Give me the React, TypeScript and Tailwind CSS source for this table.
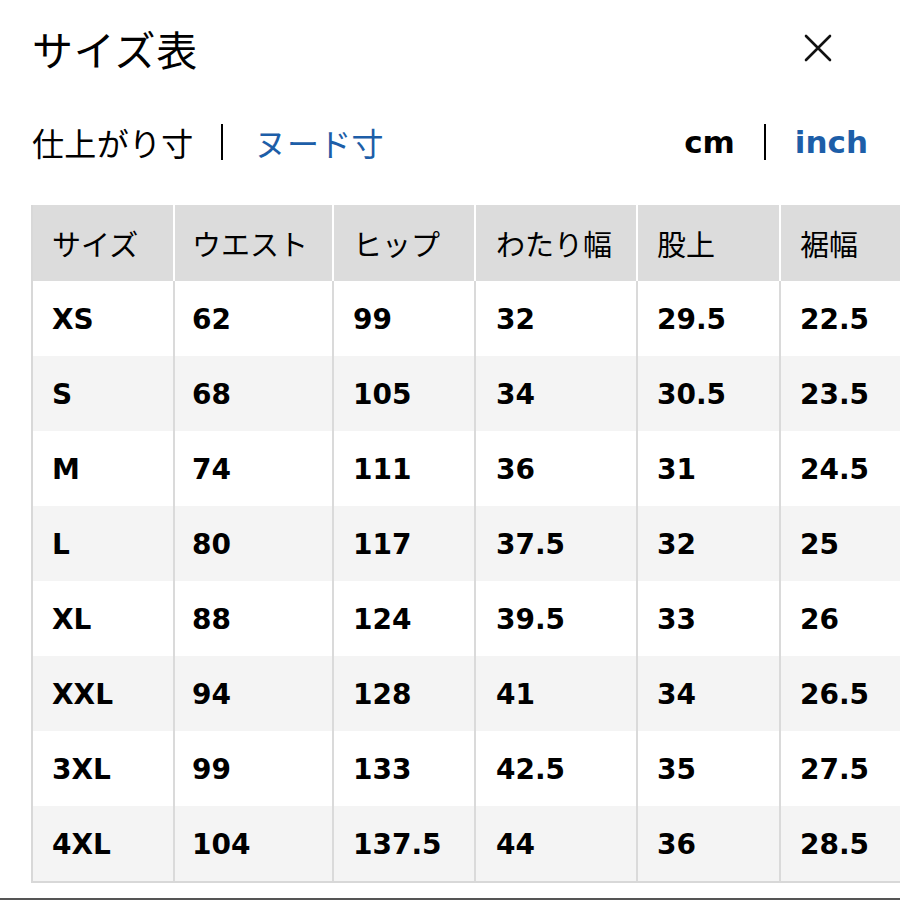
import React from 'react';

const jp = '"Noto Sans CJK JP", "Noto Sans", sans-serif';
const num = '"DejaVu Sans", "Liberation Sans", sans-serif';

const headers = ['サイズ', 'ウエスト', 'ヒップ', 'わたり幅', '股上', '裾幅'];

const rows = [
  ['XS', '62', '99', '32', '29.5', '22.5'],
  ['S', '68', '105', '34', '30.5', '23.5'],
  ['M', '74', '111', '36', '31', '24.5'],
  ['L', '80', '117', '37.5', '32', '25'],
  ['XL', '88', '124', '39.5', '33', '26'],
  ['XXL', '94', '128', '41', '34', '26.5'],
  ['3XL', '99', '133', '42.5', '35', '27.5'],
  ['4XL', '104', '137.5', '44', '36', '28.5'],
];

const cols = 'grid grid-cols-[140px_159px_142px_162px_143px_150px]';

// left padding per column (cols after the first also carry a 2px divider)
const pads = ['pl-[19px]', 'pl-[17px]', 'pl-[19px]', 'pl-[20px]', 'pl-[19px]', 'pl-[19px]'];

export default function App() {
  return (
    <div className="w-[900px] h-[900px] bg-white overflow-hidden flex flex-col text-black">
      {/* Title bar */}
      <div className="h-[98px] flex items-center justify-between pl-[32px] pr-[68px]">
        <h1 className="text-[41px] leading-none tracking-[0.02em]" style={{ fontFamily: jp }}>
          サイズ表
        </h1>
        <svg width="28" height="28" viewBox="0 0 28 28" className="mt-[-2px]">
          <path d="M2 2 L26 26 M26 2 L2 26" stroke="#111" strokeWidth="2.6" strokeLinecap="round" />
        </svg>
      </div>

      {/* Toggles */}
      <div className="h-[90px] flex items-center justify-between pl-[32px] pr-[32px]">
        <div className="flex items-center text-[32px] leading-none tracking-[0.01em]" style={{ fontFamily: jp }}>
          <span>仕上がり寸</span>
          <span className="w-[2px] h-[36px] bg-black ml-[27px] mr-[32px]" />
          <span className="text-[#1d5ea8]">ヌード寸</span>
        </div>
        <div className="flex items-center text-[31px] leading-none font-bold" style={{ fontFamily: num }}>
          <span>cm</span>
          <span className="w-[2px] h-[36px] bg-black mx-[29px]" />
          <span className="text-[#1d5ea8]">inch</span>
        </div>
      </div>

      {/* Table */}
      <div className="mt-[18px] ml-[31px] w-[900px] border-l-2 border-b-2 border-[#d8d8d8]">
        <div className={`${cols} h-[76px] bg-[#dcdcdc]`}>
          {headers.map((h, i) => (
            <div
              key={h}
              className={`flex items-center text-[29px] leading-none ${pads[i]} ${i > 0 ? 'border-l-2 border-white' : ''}`}
              style={{ fontFamily: jp }}
            >
              {h}
            </div>
          ))}
        </div>
        {rows.map((r, ri) => (
          <div key={r[0]} className={`${cols} h-[75px] ${ri % 2 === 1 ? 'bg-[#f4f4f4]' : 'bg-white'}`}>
            {r.map((c, ci) => (
              <div
                key={ci}
                className={`flex items-center text-[28px] font-bold leading-none pt-[2px] ${pads[ci]} ${ci > 0 ? 'border-l-2 border-[#dadada]' : ''}`}
                style={{ fontFamily: num }}
              >
                {c}
              </div>
            ))}
          </div>
        ))}
      </div>

      <div className="mt-[15px] h-[2px] w-full bg-[#555]" />
    </div>
  );
}
